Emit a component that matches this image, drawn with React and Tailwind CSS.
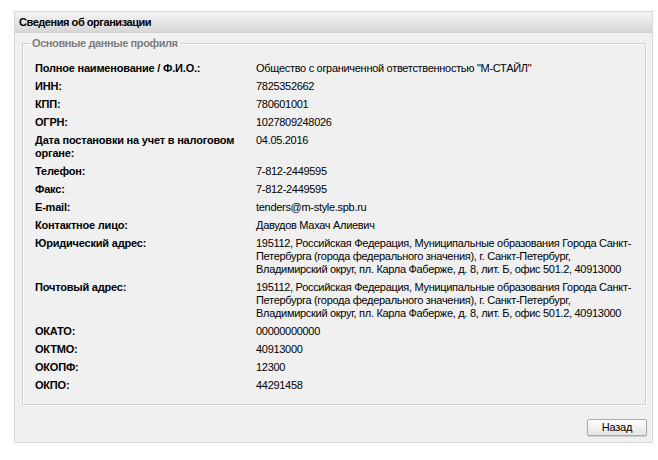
const address = [
  "195112, Российская Федерация, Муниципальные образования Города Санкт-",
  "Петербурга (города федерального значения), г. Санкт-Петербург,",
  "Владимирский округ, пл. Карла Фаберже, д. 8, лит. Б, офис 501.2, 40913000",
];

const rows = [
  ["Полное наименование / Ф.И.О.:", ["Общество с ограниченной ответственностью \"М-СТАЙЛ\""]],
  ["ИНН:", ["7825352662"]],
  ["КПП:", ["780601001"]],
  ["ОГРН:", ["1027809248026"]],
  ["Дата постановки на учет в налоговом органе:", ["04.05.2016"]],
  ["Телефон:", ["7-812-2449595"]],
  ["Факс:", ["7-812-2449595"]],
  ["E-mail:", ["tenders@m-style.spb.ru"]],
  ["Контактное лицо:", ["Давудов Махач Алиевич"]],
  ["Юридический адрес:", address],
  ["Почтовый адрес:", address],
  ["ОКАТО:", ["00000000000"]],
  ["ОКТМО:", ["40913000"]],
  ["ОКОПФ:", ["12300"]],
  ["ОКПО:", ["44291458"]],
];

export default function App() {
  return (
    <div className="min-h-[460px] bg-white pl-[14px] pr-[5px] pt-[11px] font-['Liberation_Sans',Arial,sans-serif] text-[11px] tracking-[-0.2px] text-black">
      <div className="flex h-[432px] flex-col border border-[#d6d6d6] bg-[#f0f0f0]">
        <div className="flex h-[21px] items-center border-b border-[#d0d0d0] bg-gradient-to-b from-[#f4f4f4] to-[#d7d7d7] pl-[4px] font-bold tracking-[-0.45px]">
          Сведения об организации
        </div>
        <div className="pl-[7px] pr-[6px] pt-[4px]">
          <fieldset className="h-[368px] border border-[#cfcfcf] pl-[12px] pr-[16px] pt-[10px] shadow-[inset_1px_1px_0_#fff,1px_1px_0_#fff]">
            <legend className="-ml-[5px] px-[2px] font-bold leading-[13px] tracking-[-0.4px] text-[#7d7d7d]">
              Основные данные профиля
            </legend>
            <table className="w-full table-fixed border-collapse">
              <colgroup>
                <col className="w-[221px]" />
                <col />
              </colgroup>
              <tbody>
                {rows.map(([label, lines]) => (
                  <tr key={label} className="align-top">
                    <td className="pb-[3px] pr-[8px] pt-[2px] font-bold leading-[13px]">{label}</td>
                    <td className="whitespace-nowrap pb-[3px] pt-[2px] leading-[13px] tracking-[-0.3px]">
                      {lines.map((line) => (
                        <div key={line}>{line}</div>
                      ))}
                    </td>
                  </tr>
                ))}
              </tbody>
            </table>
          </fieldset>
        </div>
        <div className="mt-auto flex justify-end pb-[6px] pr-[5px]">
          <button
            type="button"
            className="h-[17px] w-[60px] rounded-[2px] border border-[#a8a8a8] bg-gradient-to-b from-white to-[#e4e4e4] text-[11px] leading-none shadow-[0_1px_1px_#ccc]"
          >
            Назад
          </button>
        </div>
      </div>
    </div>
  );
}
